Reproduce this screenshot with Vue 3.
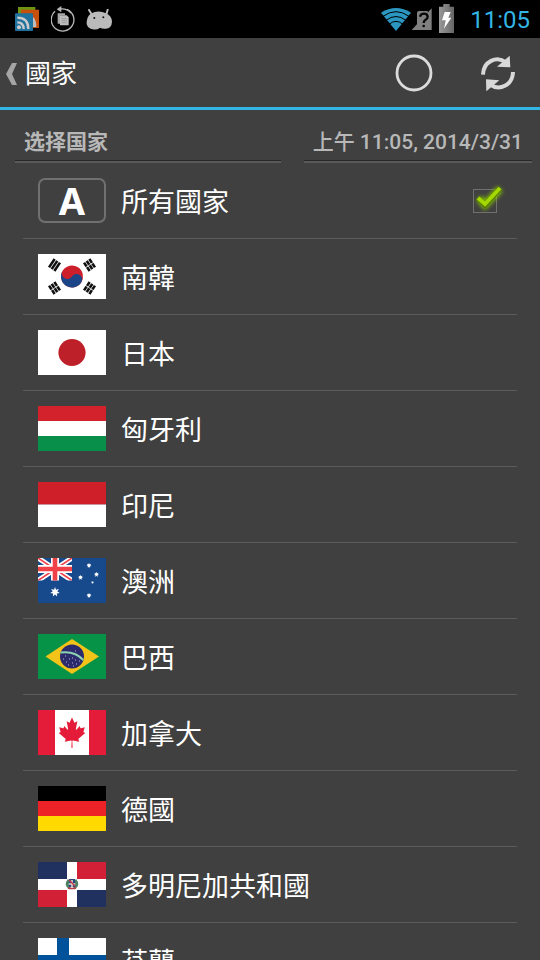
<template>
  <div class="screen">
    <!-- 系统状态栏 -->
    <div class="status-bar">
      <div class="status-left">
        <svg width="24" height="25" viewBox="0 0 72 75">
          <path d="M9 0h52v20H30v25H9z" fill="#6f9412" />
          <path d="M18 8h54v55H54V20H18z" fill="#c8500f" />
          <path d="M54 30q10 8 10 30H54z" fill="#bdbdbd" />
          <rect y="19" width="54" height="53" rx="3" fill="#20729f" />
          <circle cx="12" cy="61" r="6" fill="#ccc" />
          <path d="M7 46q19 0 19 20M7 32q33 0 33 34" fill="none" stroke="#ccc" stroke-width="7" />
        </svg>
        <svg width="24" height="26" viewBox="0 0 72 78">
          <path d="M48 10A34 34 0 1 1 12 16" fill="none" stroke="#b8b8b8" stroke-width="4" />
          <path d="M31 0v19L17 10z" fill="#b8b8b8" />
          <path d="M28 9q20-2 32 12" fill="none" stroke="#b8b8b8" stroke-width="4" />
          <path d="M20 22h22v6H27v25h-7z" fill="#a8a8a8" />
          <path d="M27 28h20l6 6v24H27z" fill="#bdbdbd" />
          <path d="M32 38h15M32 44h15M32 50h15" stroke="#8a8a8a" stroke-width="2" />
        </svg>
        <svg class="droid" width="27" height="21" viewBox="0 0 81 63">
          <path d="M16 14L9 3M61 16L65 2" stroke="#bababa" stroke-width="6" stroke-linecap="round" />
          <path d="M14 14Q37 2 60 13Q77 20 78 38Q77 58 59 59Q48 60 42 56Q33 64 20 61Q0 57 2 39Q3 22 14 14z" fill="#bababa" />
          <circle cx="25" cy="27" r="3" fill="#111" />
          <circle cx="52" cy="25" r="3" fill="#111" />
        </svg>
      </div>
      <div class="status-right">
        <svg width="30" height="23" viewBox="0 0 90 69">
          <path d="M0 14Q45-14 90 14L45 69z" fill="#2b96c0" />
          <g fill="none" stroke="#000" stroke-width="3">
            <path d="M6 25Q45-3 84 25" />
            <path d="M15 37Q45 14 75 37" />
            <path d="M24 49Q45 31 66 49" />
          </g>
        </svg>
        <svg width="21" height="24" viewBox="0 0 63 72">
          <path d="M2 69L62 4v65z" fill="#808080" />
          <path d="M18 18q0-6 6-6h26v57H18z" fill="#808080" />
          <path d="M27 29q2-9 12-9t11 9q0 6-7 10q-5 3-5 9" fill="none" stroke="#080808" stroke-width="7" />
          <circle cx="38" cy="57" r="4" fill="#080808" />
        </svg>
        <svg class="battery" width="15" height="29" viewBox="0 0 45 87">
          <defs>
            <linearGradient id="cell" x1="0" x2="1">
              <stop offset="0" stop-color="#999" />
              <stop offset="1" stop-color="#666" />
            </linearGradient>
          </defs>
          <path d="M13 0h19v8h13v79H0V8h13z" fill="url(#cell)" />
          <path d="M17 24h18l-7 17h9L15 74l5-25H9z" fill="#fff" />
        </svg>
        <span class="clock">11:05</span>
      </div>
    </div>

    <!-- 标题栏 -->
    <header class="action-bar">
      <button class="back-btn" aria-label="返回">
        <svg width="12" height="24" viewBox="0 0 12 24">
          <path d="M6 1h5L6 12l5 11H6L0 12z" fill="#a5a5a5" />
        </svg>
      </button>
      <h1>國家</h1>
      <button class="action-btn" aria-label="狀態">
        <svg width="38" height="38" viewBox="0 0 38 38">
          <circle cx="19" cy="19" r="17" fill="none" stroke="#dcdcdc" stroke-width="2.8" />
        </svg>
      </button>
      <button class="action-btn" aria-label="重新整理">
        <svg width="36" height="38" viewBox="0 0 108 114">
          <path d="M9 62C10 22 50 4 78 25" fill="none" stroke="#d8d8d8" stroke-width="12" />
          <path d="M89 5l2 35-40-2z" fill="#d8d8d8" />
          <path d="M99 54C98 94 58 112 30 91" fill="none" stroke="#d8d8d8" stroke-width="12" />
          <path d="M19 112l-1-36 40 3z" fill="#d8d8d8" />
        </svg>
      </button>
    </header>

    <div class="section-head">
      <h2 class="section-title" lang="zh-CN">选择国家</h2>
      <div class="section-time">上午 11:05, 2014/3/31</div>
    </div>

    <!-- 國家清單 -->
    <ul class="country-list">
      <li>
        <label class="row" for="all">
          <span class="all-icon">A</span>
          <span class="name">所有國家</span>
          <span class="check">
            <input id="all" v-model="allSelected" type="checkbox" />
            <svg v-if="allSelected" class="tick" width="36" height="32" viewBox="0 0 36 32">
              <path d="M8 15l6 7L29 6" fill="none" stroke="#86c800" stroke-width="7" class="glow" />
              <path d="M7 15l7 7L29 5" fill="none" stroke="#587a00" stroke-width="5.4" />
              <path d="M7 15l7 6L29 5" fill="none" stroke="#a3d800" stroke-width="4" />
            </svg>
          </span>
        </label>
      </li>
      <li v-for="c in countries" :key="c.code">
        <button class="row">
          <svg class="flag" width="68" height="45" viewBox="0 0 68 45">
            <template v-if="c.stripes">
              <rect v-for="(color, i) in c.stripes" :key="i" :y="i * 45 / c.stripes.length" width="68" :height="45 / c.stripes.length" :fill="color" />
            </template>
            <template v-else-if="c.code === 'kr'">
              <rect width="68" height="45" fill="#fff" />
              <g transform="translate(34 22.5) rotate(33)">
                <circle r="11" fill="#cd1f2b" />
                <path d="M-11 0A11 11 0 0 0 11 0A5.5 5.5 0 0 0 0 0A5.5 5.5 0 0 1-11 0z" fill="#1c4587" />
              </g>
              <g v-for="(t, i) in trigrams" :key="i" :transform="`translate(${t.x} ${t.y}) rotate(${t.r})`">
                <path d="M-5-3.2H5M-5 0H5M-5 3.2H5" stroke="#111" stroke-width="2.6" :stroke-dasharray="t.dash" />
              </g>
            </template>
            <template v-else-if="c.code === 'jp'">
              <rect width="68" height="45" fill="#fff" />
              <circle cx="34" cy="22.5" r="13.6" fill="#be2029" />
            </template>
            <template v-else-if="c.code === 'au'">
              <rect width="68" height="45" fill="#164a8c" />
              <svg width="34" height="22.5" viewBox="0 0 34 22.5">
                <path d="M0 0L34 22.5M34 0L0 22.5" stroke="#fff" stroke-width="5" />
                <path d="M0 0L34 22.5M34 0L0 22.5" stroke="#f04048" stroke-width="1.6" />
                <path d="M17 0V23M0 11H34" stroke="#fff" stroke-width="8" />
                <path d="M17 0V23M0 11H34" stroke="#f04048" stroke-width="4.6" />
              </svg>
              <path v-for="(s, i) in stars" :key="i" d="M0-10L2-4.3L7.8-6.2L4.6-1L9.7 2.2L3.7 3L4.3 9L0 4.8L-4.3 9L-3.7 3L-9.7 2.2L-4.6-1L-7.8-6.2L-2-4.3z" :transform="`translate(${s[0]} ${s[1]}) scale(${s[2]})`" fill="#fff" />
            </template>
            <template v-else-if="c.code === 'br'">
              <rect width="68" height="45" fill="#079347" />
              <path d="M7.5 22.5L34 5L61 22.5L34 40z" fill="#f2c318" />
              <circle cx="34" cy="22.5" r="12" fill="#2b2a6c" />
              <path d="M22.5 18.5Q37 16.5 45.3 26" fill="none" stroke="#8fd3b4" stroke-width="2" />
              <path d="M25 25h1M28 28h1M31 25h1M34 29h1M37 26h1M34 24h1M30 31h1M38 30h1M41 27h1M27 22h1M35 32h1M37 17h1" stroke="#b9b8d6" stroke-width="1" />
            </template>
            <template v-else-if="c.code === 'ca'">
              <rect width="68" height="45" fill="#e41c39" />
              <rect x="17" width="34" height="45" fill="#fff" />
              <path transform="translate(34 22.5) scale(.0071 .0075)" fill="#e41c39" d="M-90 2030l45-863a95 95 0 0 0-111-98l-859 151 116-320a65 65 0 0 0-20-73l-941-762 212-99a65 65 0 0 0 34-79l-186-572 542 115a65 65 0 0 0 73-38l105-247 423 454a65 65 0 0 0 111-57l-204-1052 327 189a65 65 0 0 0 91-27l332-652 332 652a65 65 0 0 0 91 27l327-189-204 1052a65 65 0 0 0 111 57l423-454 105 247a65 65 0 0 0 73 38l542-115-186 572a65 65 0 0 0 34 79l212 99-941 762a65 65 0 0 0-20 73l116 320-859-151a95 95 0 0 0-111 98l45 863z" />
            </template>
            <template v-else-if="c.code === 'do'">
              <rect width="68" height="45" fill="#fff" />
              <path d="M0 0h29v17H0zM39 28h29v17H39z" fill="#20315f" />
              <path d="M39 0h29v17H39zM0 28h29v17H0z" fill="#d22036" />
              <path d="M31 18q-4 5 1 8M37 18q4 5-1 8" fill="none" stroke="#4c8065" stroke-width="3" />
              <rect x="31" y="17" width="6" height="8" fill="#294780" />
              <path d="M34 18v7M31 22h6" stroke="#e8d9d2" stroke-width="1.6" />
              <path d="M31 18l6 6" stroke="#c43b46" stroke-width="1.4" />
              <path d="M30 26q4 1 8 0" fill="none" stroke="#b83b48" stroke-width="1.5" />
            </template>
            <template v-else-if="c.code === 'fi'">
              <rect width="68" height="45" fill="#fff" />
              <path d="M19 0h12v17h37v12H31v16H19V29H0V17h19z" fill="#00529b" />
            </template>
          </svg>
          <span class="name">{{ c.name }}</span>
        </button>
      </li>
    </ul>
  </div>
</template>

<script setup>
import { ref } from 'vue'

const allSelected = ref(true)

const countries = [
  { code: 'kr', name: '南韓' },
  { code: 'jp', name: '日本' },
  { code: 'hu', name: '匈牙利', stripes: ['#d3222b', '#ffffff', '#088f49'] },
  { code: 'id', name: '印尼', stripes: ['#cf1f29', '#ffffff'] },
  { code: 'au', name: '澳洲' },
  { code: 'br', name: '巴西' },
  { code: 'ca', name: '加拿大' },
  { code: 'de', name: '德國', stripes: ['#000000', '#ed2226', '#ffd900'] },
  { code: 'do', name: '多明尼加共和國' },
  { code: 'fi', name: '芬蘭' }
]

// 太極旗四卦
const trigrams = [
  { x: 16.5, y: 11, r: -56, dash: 'none' },
  { x: 51.5, y: 11, r: 56, dash: '4.6 0.8' },
  { x: 16.5, y: 34, r: 56, dash: '4.6 0.8' },
  { x: 51.5, y: 34, r: -56, dash: '4.6 0.8' }
]

// 澳洲國旗星星：x, y, 縮放
const stars = [
  [17, 34, 0.5],
  [51, 7.5, 0.27],
  [42.5, 19.5, 0.27],
  [58.5, 16.5, 0.27],
  [54.5, 24.5, 0.15],
  [51, 37.5, 0.27]
]
</script>

<style>
body {
  background: #404040;
}
</style>

<style scoped>
* {
  margin: 0;
  padding: 0;
  box-sizing: border-box;
}
.screen {
  height: 100vh;
  display: flex;
  flex-direction: column;
  overflow: hidden;
  background: #404040;
  color: #fff;
  font-family: Roboto, "Noto Sans CJK TC", sans-serif;
}
svg {
  display: block;
  flex: none;
}
button {
  border: none;
  background: none;
  color: inherit;
  font: inherit;
  cursor: pointer;
}

/* 状态栏 */
.status-bar {
  flex: none;
  height: 38px;
  padding: 0 10px 0 15px;
  background: #000;
  display: flex;
  align-items: center;
  justify-content: space-between;
}
.status-left {
  display: flex;
  align-items: center;
  gap: 12px;
}
.droid {
  margin-left: -1px;
}
.status-right {
  display: flex;
  align-items: center;
}
.battery {
  margin: 0 16px 2px 7px;
}
.clock {
  padding-top: 2px;
  color: #33b5e5;
  font-size: 24px;
  line-height: 36px;
}

/* 标题栏 */
.action-bar {
  flex: none;
  height: 72px;
  padding-left: 6px;
  border-bottom: 3px solid #33b5e5;
  display: flex;
  align-items: center;
}
.back-btn {
  padding: 8px 7px 6px 0;
}
h1 {
  flex: 1;
  padding-top: 2px;
  font-size: 26px;
  font-weight: 400;
  line-height: 40px;
}
.action-btn {
  width: 84px;
  height: 68px;
  display: flex;
  align-items: center;
  justify-content: center;
}

/* 分组标题 */
.section-head {
  flex: none;
  display: flex;
  gap: 23px;
  padding: 10px 8px 0 15px;
  color: #b8b8b8;
}
.section-title,
.section-time {
  height: 43px;
  padding: 0 9px;
  border-bottom: 2px solid #595959;
  box-shadow: inset 0 -1px #282828;
  font-size: 21px;
  font-weight: 500;
  line-height: 44px;
  white-space: nowrap;
}
.section-title {
  flex: 1;
  font-family: Roboto, "Noto Sans CJK SC", sans-serif;
  font-weight: 700;
}

/* 列表 */
.country-list {
  flex: 1;
  min-height: 0;
  margin: 0 23px;
  overflow: hidden;
  list-style: none;
}
.row {
  width: 100%;
  height: 76px;
  padding: 0 20px 0 15px;
  border-bottom: 1px solid #5b5b5b;
  display: flex;
  align-items: center;
  gap: 15px;
  text-align: left;
}
.all-icon {
  width: 68px;
  height: 45px;
  border: 2px solid #707070;
  border-radius: 7px;
  font-family: "Noto Sans", sans-serif;
  font-size: 38px;
  font-weight: 700;
  line-height: 41px;
  text-align: center;
}
.name {
  flex: 1;
  padding-top: 4px;
  font-size: 27px;
  line-height: 40px;
}
.check {
  position: relative;
  width: 24px;
  height: 24px;
}
.check input {
  display: block;
  width: 24px;
  height: 24px;
  appearance: none;
  border: 1px solid #707070;
}
.tick {
  position: absolute;
  top: -6px;
  left: -2px;
  pointer-events: none;
}
.glow {
  filter: blur(2px);
}
</style>
